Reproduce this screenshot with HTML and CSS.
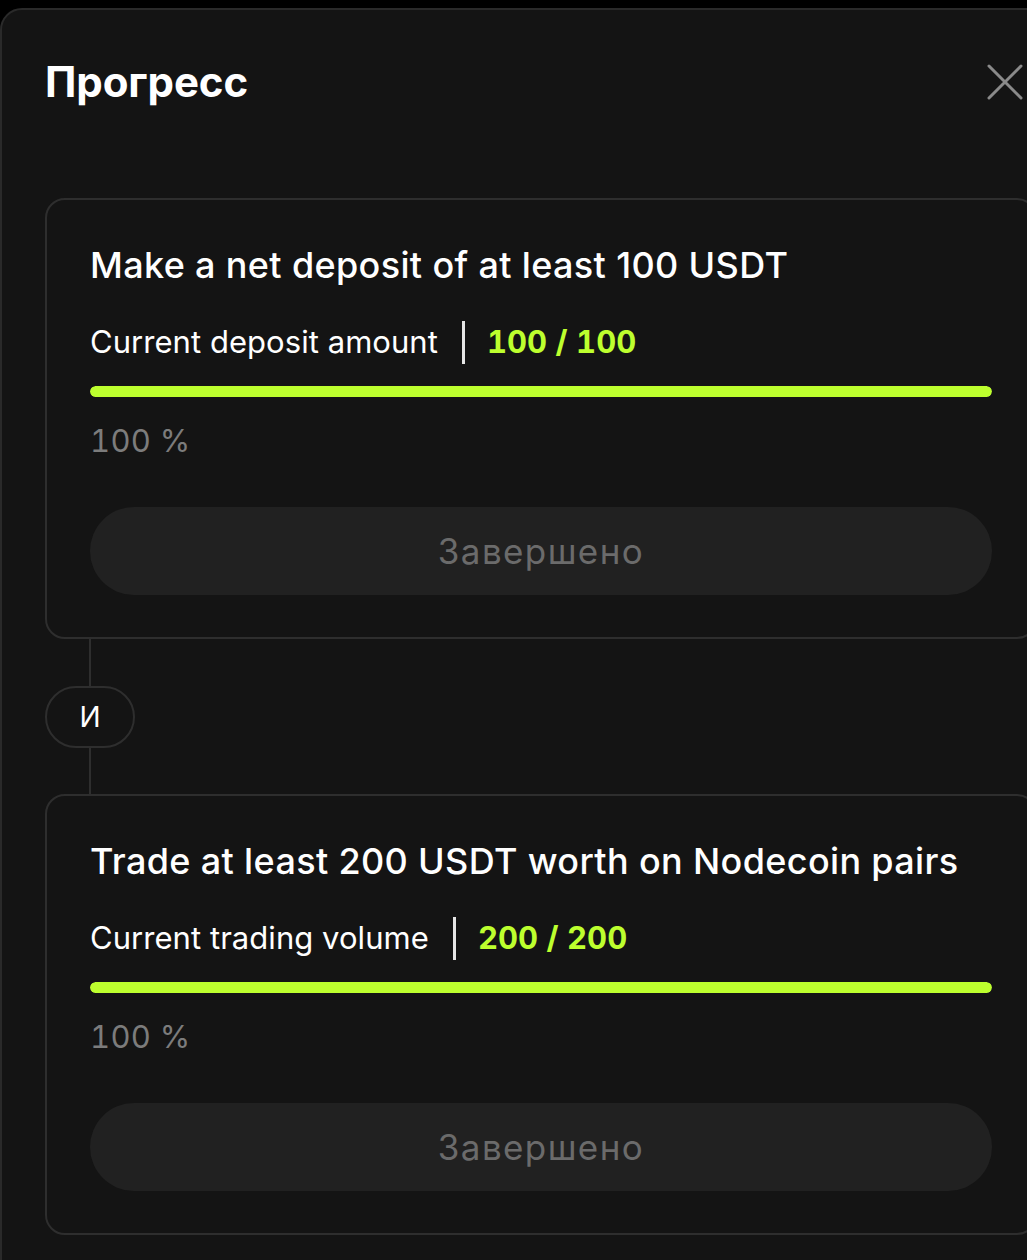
FILE: index.html
```html
<!DOCTYPE html>
<html lang="ru">
<head>
<meta charset="utf-8">
<title>Прогресс</title>
<link rel="stylesheet" href="styles.css">
</head>
<body>
<div class="panel">
  <div class="header">
    <h1 class="title">Прогресс</h1>
    <button class="close" aria-label="Закрыть">
      <svg width="36" height="36" viewBox="0 0 36 36"><path d="M2 2 L34 34 M34 2 L2 34" stroke="#8a8a8a" stroke-width="3" stroke-linecap="round"/></svg>
    </button>
  </div>
  <div class="tasks">
    <div class="card">
      <div class="card-title">Make a net deposit of at least 100 USDT</div>
      <div class="stat">
        <span class="stat-label">Current deposit amount</span>
        <span class="divider"></span>
        <span class="stat-value">100 / 100</span>
      </div>
      <div class="bar"><div class="bar-fill" style="width:100%"></div></div>
      <div class="percent">100 %</div>
      <div class="done">Завершено</div>
    </div>
    <div class="connector">
      <span class="line top"></span>
      <span class="pill">И</span>
      <span class="line"></span>
    </div>
    <div class="card">
      <div class="card-title">Trade at least 200 USDT worth on Nodecoin pairs</div>
      <div class="stat">
        <span class="stat-label">Current trading volume</span>
        <span class="divider"></span>
        <span class="stat-value">200 / 200</span>
      </div>
      <div class="bar"><div class="bar-fill" style="width:100%"></div></div>
      <div class="percent">100 %</div>
      <div class="done">Завершено</div>
    </div>
  </div>
</div>
</body>
</html>
```

FILE: styles.css
```css
* { box-sizing: border-box; }
html, body {
  margin: 0;
  padding: 0;
  background: #000;
  overflow: hidden;
  height: 1260px;
}
body {
  font-family: Inter, "Noto Sans", sans-serif;
  color: #fff;
  padding-top: 8px;
}
.panel {
  width: 1083px;
  min-height: 1300px;
  background: #141414;
  border: 2px solid #2a2a2a;
  border-radius: 22px;
  padding: 46px 44px 0 43px;
}
.header {
  display: flex;
  justify-content: space-between;
  align-items: center;
}
.title {
  margin: 0;
  font-size: 42px;
  line-height: 52px;
  font-weight: 700;
  letter-spacing: -0.1px;
}
.close {
  background: none;
  border: none;
  padding: 0;
  margin-right: 14px;
  width: 36px;
  height: 36px;
  display: flex;
}
.tasks {
  margin-top: 90px;
  display: flex;
  flex-direction: column;
}
.card {
  border: 2px solid #2e2e2e;
  border-radius: 20px;
  padding: 43px 43px 42px 43px;
  display: flex;
  flex-direction: column;
}
.card-title {
  font-size: 36px;
  line-height: 44px;
  font-weight: 500;
  letter-spacing: 0.35px;
}
.stat {
  margin-top: 33px;
  height: 44px;
  display: flex;
  align-items: center;
}
.stat-label {
  font-size: 31px;
  line-height: 44px;
  font-weight: 400;
  letter-spacing: 0.05px;
}
.divider {
  width: 3px;
  height: 43px;
  background: #e6e6e6;
  margin: 0 22px 0 24px;
}
.stat-value {
  font-size: 31px;
  line-height: 44px;
  font-weight: 700;
  color: #bdff2e;
  letter-spacing: 0.05px;
  font-variant-numeric: tabular-nums;
}
.bar {
  margin-top: 22px;
  height: 11px;
  border-radius: 6px;
  background: #2a2a2a;
  overflow: hidden;
}
.bar-fill {
  height: 100%;
  background: #bdff2e;
  border-radius: 6px;
}
.percent {
  margin-top: 24px;
  font-size: 31px;
  line-height: 40px;
  color: #7c7c7c;
  letter-spacing: 0.3px;
  font-variant-numeric: tabular-nums;
}
.done {
  margin-top: 46px;
  height: 88px;
  border-radius: 44px;
  background: #212121;
  color: #6b6b6b;
  font-size: 35px;
  font-weight: 400;
  letter-spacing: 1.4px;
  display: flex;
  align-items: center;
  justify-content: center;
}
.connector {
  display: flex;
  flex-direction: column;
  align-items: flex-start;
}
.connector .line {
  width: 2px;
  height: 46px;
  background: #2e2e2e;
  margin-left: 44px;
}
.connector .line.top {
  height: 47px;
}
.pill {
  width: 90px;
  height: 62px;
  border: 2px solid #2e2e2e;
  border-radius: 31px;
  display: flex;
  align-items: center;
  justify-content: center;
  font-size: 28px;
  color: #fff;
}
```
